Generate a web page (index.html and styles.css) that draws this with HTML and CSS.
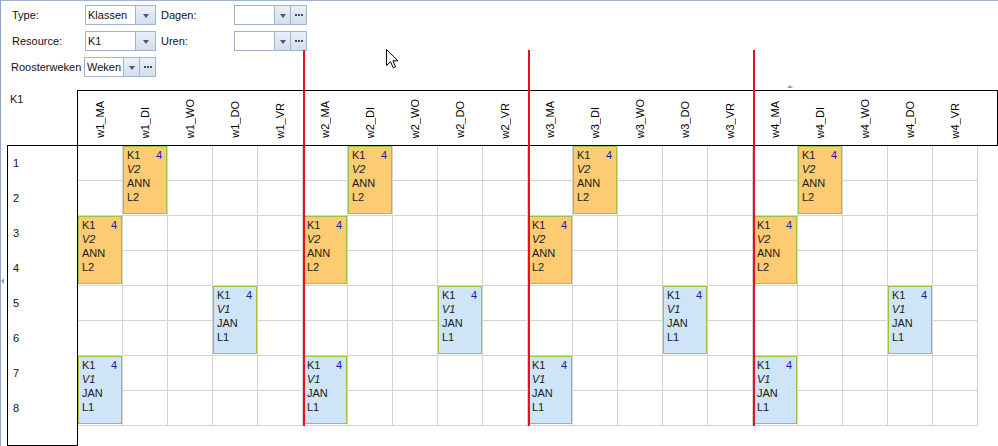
FILE: index.html
```html
<!doctype html>
<html lang="nl">
<head>
    <meta charset="UTF-8">
    <title>Rooster</title>
    <link rel="stylesheet" href="styles.css">
</head>
<body>
    <div class="window">
        <div class="toolbar">
            <label class="lbl">Type:</label>
            <div class="combo combo-type">
                <span class="combo-text">Klassen</span>
                <span class="btn drop wide"></span>
            </div>
            <label class="lbl lbl-right">Dagen:</label>
            <div class="combo combo-side">
                <span class="combo-text"></span>
                <span class="btn drop"></span>
                <span class="btn dots"></span>
            </div>

            <label class="lbl">Resource:</label>
            <div class="combo combo-type">
                <span class="combo-text">K1</span>
                <span class="btn drop wide"></span>
            </div>
            <label class="lbl lbl-right">Uren:</label>
            <div class="combo combo-side">
                <span class="combo-text"></span>
                <span class="btn drop"></span>
                <span class="btn dots"></span>
            </div>

            <div class="weeks-row">
                <label class="lbl lbl-weeks">Roosterweken</label>
                <div class="combo combo-weeks">
                    <span class="combo-text">Weken</span>
                    <span class="btn drop"></span>
                    <span class="btn dots"></span>
                </div>
            </div>
        </div>

        <div class="schedule">
            <div class="corner">K1</div>
            <div class="head" id="head"></div>
            <div class="rows" id="rows"></div>
            <div class="board" id="board"></div>
        </div>

        <div class="week-line line-1"></div>
        <div class="week-line line-2"></div>
        <div class="week-line line-3"></div>

        <span class="tri-up"></span>
        <span class="tri-left"></span>

        <svg class="cursor" width="13" height="20" viewBox="0 0 13 20">
            <path d="M0.5 0.5 L0.5 16.5 L4.5 12.7 L7.3 18.8 L9.6 17.8 L6.9 11.8 L12 11.8 Z" fill="#fff" stroke="#000" stroke-width="1"/>
        </svg>
    </div>

    <script>
    window.onload=function(){
        var days=['MA','DI','WO','DO','VR'];
        var head=document.getElementById('head');
        for(var w=1;w<=4;w++){
            for(var d=0;d<days.length;d++){
                var col=document.createElement('div');
                col.className='col-label';
                var span=document.createElement('span');
                span.textContent='w'+w+'_'+days[d];
                col.appendChild(span);
                head.appendChild(col);
            }
        }

        var rows=document.getElementById('rows');
        for(var i=1;i<=8;i++){
            var r=document.createElement('div');
            r.className='row-label';
            r.textContent=i;
            rows.appendChild(r);
        }

        // les: kolom in de week, beginuur, kleur, vak, docent, lokaal
        var lessons=[
            {day:2,row:1,kind:'orange',vak:'V2',doc:'ANN',lok:'L2'},
            {day:1,row:3,kind:'orange',vak:'V2',doc:'ANN',lok:'L2'},
            {day:4,row:5,kind:'blue',vak:'V1',doc:'JAN',lok:'L1'},
            {day:1,row:7,kind:'blue',vak:'V1',doc:'JAN',lok:'L1'}
        ];
        var board=document.getElementById('board');
        for(var w=0;w<4;w++){
            for(var j=0;j<lessons.length;j++){
                var l=lessons[j];
                var ev=document.createElement('div');
                ev.className='lesson '+l.kind;
                ev.style.gridColumn=(w*5+l.day)+' / span 1';
                ev.style.gridRow=l.row+' / span 2';
                ev.innerHTML='<div class="lesson-top"><span>K1</span><span class="num">4</span></div>'+
                    '<div class="vak">'+l.vak+'</div><div>'+l.doc+'</div><div>'+l.lok+'</div>';
                board.appendChild(ev);
            }
        }
    }
    </script>
</body>
</html>
```

FILE: styles.css
```css
body{
    margin:0;
    padding:0;
    background:#fff;
}
.window{
    position:relative;
    height:446px;
    box-sizing:border-box;
    border-top:1px solid #9fb3d1;
    border-left:1px solid #8fa6c8;
    font-family:"Liberation Sans", Arial, sans-serif;
    font-size:11px;
    color:#111;
    overflow:hidden;
}

/* bovenbalk met keuzelijsten */
.toolbar{
    height:89px;
    box-sizing:border-box;
    padding:4px 0 0 10px;
    display:grid;
    grid-template-columns:74px 71px 78px 73px;
    grid-template-rows:20px 20px 20px;
    row-gap:6px;
    align-content:start;
}
.lbl{
    line-height:20px;
    padding-left:1px;
    white-space:nowrap;
}
.lbl-right{
    padding-left:5px;
}
.lbl-weeks{
    width:73px;
    padding-left:0;
}
.weeks-row{
    grid-column:1 / span 2;
    display:flex;
}
.combo{
    display:flex;
    height:20px;
    box-sizing:border-box;
    border:1px solid #a2b3cc;
    background:#fff;
}
.combo-weeks{
    width:72px;
}
.combo-text{
    flex:1;
    padding-left:2px;
    line-height:18px;
    overflow:hidden;
}
.btn{
    width:15px;
    border-left:1px solid #a2b3cc;
    background:linear-gradient(#e9f0f9,#d3dfef);
    display:flex;
    align-items:center;
    justify-content:center;
}
.btn.wide{
    width:19px;
}
.drop::before{
    content:"";
    border-top:4px solid #4b5a6e;
    border-left:3.5px solid transparent;
    border-right:3.5px solid transparent;
    margin-top:1px;
}
.dots::before{
    content:"";
    width:2px;
    height:2px;
    background:#3c4b62;
    box-shadow:3px 0 #3c4b62, 6px 0 #3c4b62;
    margin-left:-6px;
}

/* rooster */
.schedule{
    display:grid;
    grid-template-columns:77px 1fr;
    grid-template-rows:56px auto;
}
.corner{
    padding:3px 0 0 9px;
    font-size:11px;
}
.head{
    margin-left:-1px;
    border:1px solid #000;
    box-sizing:border-box;
    display:flex;
}
.col-label{
    width:45px;
    flex:none;
    display:flex;
    align-items:flex-end;
    justify-content:center;
    padding-bottom:7px;
    box-sizing:border-box;
}
.col-label span{
    writing-mode:vertical-rl;
    transform:rotate(180deg);
    line-height:13px;
    color:#000;
}
.rows{
    margin:-1px 0 0 6px;
    height:301px;
    box-sizing:border-box;
    border:1px solid #000;
}
.row-label{
    height:35px;
    line-height:35px;
    padding-left:5px;
}
.row-label:first-child{
    line-height:34px;
}
.board{
    width:900px;
    height:280px;
    display:grid;
    grid-template-columns:repeat(20,45px);
    grid-template-rows:repeat(8,35px);
    background-image:
        linear-gradient(to right,transparent 44px,#d3d3d3 44px),
        linear-gradient(to bottom,transparent 34px,#d3d3d3 34px);
    background-size:45px 35px;
}
.lesson{
    margin:0 1px 2px 0;
    border:1px solid #9cc43e;
    padding:1px 4px 0 3px;
    line-height:14px;
    color:#1a1a1a;
}
.lesson.orange{
    background:#fdcc72;
}
.lesson.blue{
    background:#cfe4f6;
}
.lesson-top{
    display:flex;
    justify-content:space-between;
}
.num{
    color:#1c1ca8;
}
.vak{
    font-style:italic;
}

/* over de inhoud heen */
.week-line{
    position:absolute;
    top:49px;
    width:2px;
    height:376px;
    background:#e8101c;
}
.line-1{ left:302px; }
.line-2{ left:527px; }
.line-3{ left:752px; }
.tri-up{
    position:absolute;
    left:786px;
    top:84px;
    border-bottom:3px solid #8ea2bf;
    border-left:3px solid transparent;
    border-right:3px solid transparent;
}
.tri-left{
    position:absolute;
    left:0;
    top:277px;
    border-right:3px solid #8ea2bf;
    border-top:3px solid transparent;
    border-bottom:3px solid transparent;
}
.cursor{
    position:absolute;
    left:385px;
    top:48px;
}
```
